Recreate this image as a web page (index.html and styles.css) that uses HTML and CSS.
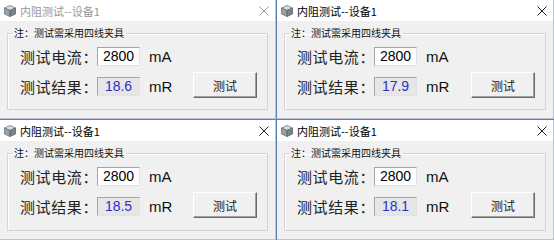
FILE: index.html
```html
<!DOCTYPE html>
<html lang="zh">
<head>
<meta charset="utf-8">
<link rel="stylesheet" href="styles.css">
</head>
<body>
<div class="grid">
  <div class="win inactive">
    <div class="titlebar">
      <svg class="icon" viewBox="0 0 12 12" width="12" height="12"><polygon points="6,0.5 11.5,3 6,5.5 0.5,3" fill="#d8dde2" stroke="#6d7378" stroke-width="0.8"/><polygon points="0.5,3 6,5.5 6,11.5 0.5,9" fill="#9aa1a8" stroke="#6d7378" stroke-width="0.8"/><polygon points="11.5,3 6,5.5 6,11.5 11.5,9" fill="#7c848c" stroke="#5d6368" stroke-width="0.8"/></svg>
      <span class="title">内阻测试--设备1</span>
      <svg class="close" viewBox="0 0 10 10" width="10" height="10"><path d="M0.5 0.5 L9.5 9.5 M9.5 0.5 L0.5 9.5" stroke="currentColor" stroke-width="1"/></svg>
    </div>
    <div class="client">
      <fieldset class="group">
        <legend>注：测试需采用四线夹具</legend>
        <div class="content">
          <div class="rows">
            <div class="row"><span class="label">测试电流：</span><span class="box in">2800</span><span class="unit">mA</span></div>
            <div class="row"><span class="label">测试结果：</span><span class="box out">18.6</span><span class="unit">mR</span></div>
          </div>
          <button class="btn">测试</button>
        </div>
      </fieldset>
    </div>
  </div>
  <div class="win">
    <div class="titlebar">
      <svg class="icon" viewBox="0 0 12 12" width="12" height="12"><polygon points="6,0.5 11.5,3 6,5.5 0.5,3" fill="#d8dde2" stroke="#6d7378" stroke-width="0.8"/><polygon points="0.5,3 6,5.5 6,11.5 0.5,9" fill="#9aa1a8" stroke="#6d7378" stroke-width="0.8"/><polygon points="11.5,3 6,5.5 6,11.5 11.5,9" fill="#7c848c" stroke="#5d6368" stroke-width="0.8"/></svg>
      <span class="title">内阻测试--设备1</span>
      <svg class="close" viewBox="0 0 10 10" width="10" height="10"><path d="M0.5 0.5 L9.5 9.5 M9.5 0.5 L0.5 9.5" stroke="currentColor" stroke-width="1"/></svg>
    </div>
    <div class="client">
      <fieldset class="group">
        <legend>注：测试需采用四线夹具</legend>
        <div class="content">
          <div class="rows">
            <div class="row"><span class="label">测试电流：</span><span class="box in">2800</span><span class="unit">mA</span></div>
            <div class="row"><span class="label">测试结果：</span><span class="box out">17.9</span><span class="unit">mR</span></div>
          </div>
          <button class="btn">测试</button>
        </div>
      </fieldset>
    </div>
  </div>
  <div class="win">
    <div class="titlebar">
      <svg class="icon" viewBox="0 0 12 12" width="12" height="12"><polygon points="6,0.5 11.5,3 6,5.5 0.5,3" fill="#d8dde2" stroke="#6d7378" stroke-width="0.8"/><polygon points="0.5,3 6,5.5 6,11.5 0.5,9" fill="#9aa1a8" stroke="#6d7378" stroke-width="0.8"/><polygon points="11.5,3 6,5.5 6,11.5 11.5,9" fill="#7c848c" stroke="#5d6368" stroke-width="0.8"/></svg>
      <span class="title">内阻测试--设备1</span>
      <svg class="close" viewBox="0 0 10 10" width="10" height="10"><path d="M0.5 0.5 L9.5 9.5 M9.5 0.5 L0.5 9.5" stroke="currentColor" stroke-width="1"/></svg>
    </div>
    <div class="client">
      <fieldset class="group">
        <legend>注：测试需采用四线夹具</legend>
        <div class="content">
          <div class="rows">
            <div class="row"><span class="label">测试电流：</span><span class="box in">2800</span><span class="unit">mA</span></div>
            <div class="row"><span class="label">测试结果：</span><span class="box out">18.5</span><span class="unit">mR</span></div>
          </div>
          <button class="btn">测试</button>
        </div>
      </fieldset>
    </div>
  </div>
  <div class="win">
    <div class="titlebar">
      <svg class="icon" viewBox="0 0 12 12" width="12" height="12"><polygon points="6,0.5 11.5,3 6,5.5 0.5,3" fill="#d8dde2" stroke="#6d7378" stroke-width="0.8"/><polygon points="0.5,3 6,5.5 6,11.5 0.5,9" fill="#9aa1a8" stroke="#6d7378" stroke-width="0.8"/><polygon points="11.5,3 6,5.5 6,11.5 11.5,9" fill="#7c848c" stroke="#5d6368" stroke-width="0.8"/></svg>
      <span class="title">内阻测试--设备1</span>
      <svg class="close" viewBox="0 0 10 10" width="10" height="10"><path d="M0.5 0.5 L9.5 9.5 M9.5 0.5 L0.5 9.5" stroke="currentColor" stroke-width="1"/></svg>
    </div>
    <div class="client">
      <fieldset class="group">
        <legend>注：测试需采用四线夹具</legend>
        <div class="content">
          <div class="rows">
            <div class="row"><span class="label">测试电流：</span><span class="box in">2800</span><span class="unit">mA</span></div>
            <div class="row"><span class="label">测试结果：</span><span class="box out">18.1</span><span class="unit">mR</span></div>
          </div>
          <button class="btn">测试</button>
        </div>
      </fieldset>
    </div>
  </div>
</div>
</body>
</html>
```
FILE: styles.css
```css
html, body {
  margin: 0;
  padding: 0;
  width: 554px;
  height: 240px;
  overflow: hidden;
}
body {
  background: #5c7fb6;
  font-family: "Noto Sans CJK SC", "Liberation Sans", sans-serif;
}
.grid {
  display: grid;
  grid-template-columns: 276px 277px;
  grid-template-rows: 119px 120px;
  gap: 1px;
}
.win {
  display: flex;
  flex-direction: column;
  background: #f0f0f0;
  border: 1px solid #b9c4d4;
  border-top: none;
  border-left: none;
  overflow: hidden;
}
.titlebar {
  height: 21px;
  flex: none;
  background: #ffffff;
  display: flex;
  align-items: center;
  padding-left: 4px;
  padding-right: 6px;
  color: #000;
}
.inactive .titlebar {
  color: #999;
}
.icon {
  flex: none;
  margin-right: 4px;
}
.title {
  font-size: 11px;
  line-height: 12px;
  flex: 1;
  white-space: nowrap;
}
.close {
  flex: none;
  color: #222;
}
.inactive .close {
  color: #999;
}
.client {
  flex: 1;
  padding: 6px 7px 8px 7px;
}
.group {
  margin: 0;
  border: 1px solid #d5d5d5;
  box-shadow: inset 1px 1px 0 #fff;
  padding: 2px 10px 6px 12px;
  height: 100%;
  box-sizing: border-box;
}
.group legend {
  font-size: 10px;
  line-height: 12px;
  padding: 0 2px 0 1px;
  margin-left: -7px;
  color: #111;
  white-space: nowrap;
}
.content {
  display: flex;
  align-items: flex-end;
  justify-content: space-between;
}
.rows {
  display: flex;
  flex-direction: column;
  gap: 11px;
  padding-top: 6px;
}
.row {
  display: flex;
  align-items: center;
  height: 19px;
  white-space: nowrap;
}
.label {
  flex: none;
  font-size: 15px;
  line-height: 19px;
  letter-spacing: 0.6px;
  width: 77px;
  color: #222;
  white-space: nowrap;
}
.box {
  flex: none;
  font-family: "Liberation Sans", Arial, sans-serif;
  font-size: 14px;
  width: 41px;
  height: 17px;
  line-height: 17px;
  text-align: center;
  border: 1px solid #a5a5a5;
  border-right-color: #e3e3e3;
  border-bottom-color: #e3e3e3;
}
.box.in {
  background: #fff;
  color: #000;
}
.box.out {
  background: #e6e6e6;
  color: #2f2fc8;
}
.unit {
  flex: none;
  font-family: "Liberation Sans", Arial, sans-serif;
  font-size: 15px;
  margin-left: 9px;
  color: #111;
}
.btn {
  flex: none;
  width: 64px;
  height: 26px;
  margin-bottom: -2px;
  background: #f0f0f0;
  border: 1px solid;
  border-color: #fff #696969 #696969 #fff;
  box-shadow: inset -1px -1px 0 #a0a0a0;
  font-family: "Noto Sans CJK SC", sans-serif;
  font-size: 12px;
  color: #222;
  padding: 0;
}
```
